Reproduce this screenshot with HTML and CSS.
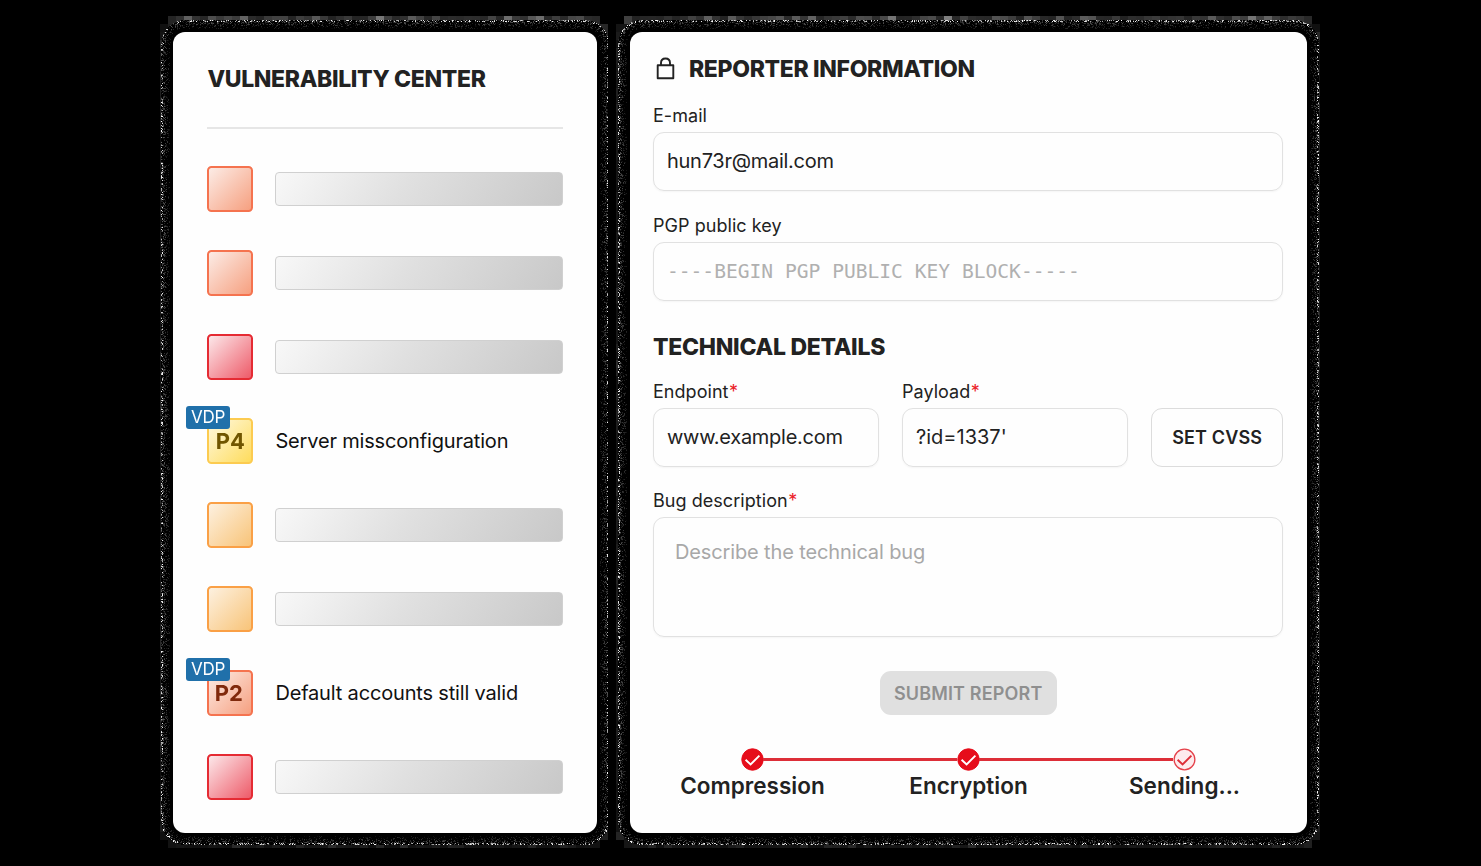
FILE: index.html
```html
<!DOCTYPE html>
<html lang="en">
<head>
<meta charset="utf-8">
<title>Vulnerability Center</title>
<link rel="stylesheet" href="styles.css">
</head>
<body>
<canvas class="grain" width="1481" height="866"></canvas>
<main class="board">
  <section class="card center">
    <h2 class="title">VULNERABILITY CENTER</h2>
    <ul class="list">
      <li class="row"><span class="level orange"></span><span class="bar"></span></li>
      <li class="row"><span class="level orange"></span><span class="bar"></span></li>
      <li class="row"><span class="level red"></span><span class="bar"></span></li>
      <li class="row"><span class="level yellow">P4<span class="tag">VDP</span></span><span class="name">Server missconfiguration</span></li>
      <li class="row"><span class="level amber"></span><span class="bar"></span></li>
      <li class="row"><span class="level amber"></span><span class="bar"></span></li>
      <li class="row"><span class="level orange p2">P2<span class="tag">VDP</span></span><span class="name">Default accounts still valid</span></li>
      <li class="row"><span class="level red"></span><span class="bar"></span></li>
    </ul>
  </section>

  <section class="card report">
    <h2 class="title reporter">
      <svg class="lock" viewBox="0 0 20 24" fill="none" stroke="#222" stroke-width="1.9" stroke-linejoin="round"><path d="M1.7 8.3H17.3V21.3H1.7Z"/><path d="M5 8.3V6.1C5 3.3 6.9 1.5 9.5 1.5S14 3.3 14 6.1V8.3"/></svg>
      <span>REPORTER INFORMATION</span>
    </h2>
    <div class="label">E-mail</div>
    <div class="input">hun73r@mail.com</div>
    <div class="label second">PGP public key</div>
    <div class="input mono">----BEGIN PGP PUBLIC KEY BLOCK-----</div>
    <h2 class="title technical">TECHNICAL DETAILS</h2>
    <div class="fields">
      <div><div class="label">Endpoint<i>*</i></div><div class="input">www.example.com</div></div>
      <div><div class="label">Payload<i>*</i></div><div class="input payload">?id=1337'</div></div>
      <div class="cvss">SET CVSS</div>
    </div>
    <div class="label third">Bug description<i>*</i></div>
    <div class="input area">Describe the technical bug</div>
    <div class="submit">SUBMIT REPORT</div>
    <div class="steps">
      <div class="step done"><svg class="dot" viewBox="0 0 24 24"><circle cx="12" cy="12" r="11.2"/><path d="M4.8 12.2L10 17.2L19.2 8"/></svg><span>Compression</span></div>
      <div class="step done"><svg class="dot" viewBox="0 0 24 24"><circle cx="12" cy="12" r="11.2"/><path d="M4.8 12.2L10 17.2L19.2 8"/></svg><span>Encryption</span></div>
      <div class="step busy"><svg class="dot" viewBox="0 0 24 24"><circle cx="12" cy="12" r="10.8"/><path d="M4.8 12.2L10 17.2L19.2 8"/></svg><span>Sending...</span></div>
    </div>
  </section>
</main>
<script src="grain.js"></script>
</body>
</html>
```
FILE: styles.css
```css
* { box-sizing: border-box; }
body {
  margin: 0;
  width: 1481px;
  height: 866px;
  overflow: hidden;
  background: #000;
  color: #222;
  font-family: Inter, "Liberation Sans", sans-serif;
}
.grain { position: absolute; inset: 0; }
.board {
  position: relative;
  display: flex;
  gap: 33px;
  padding: 32px 174px 33px 173.4px;
}
.card { height: 801px; background: #fefefe; border-radius: 12px; }
.center { width: 423.6px; padding: 0 34.2px 0 34px; }
.report { width: 677px; padding: 0 23.6px 0 23px; }
.title {
  margin: 0;
  font-size: 23px;
  line-height: 30px;
  font-weight: 800;
  letter-spacing: -.34px;
  white-space: nowrap;
}
.center .title { height: 97px; padding-top: 32px; border-bottom: 2px solid #e6e6e6; }
.list { margin: 0; padding: 18.4px 0 0; list-style: none; }
.row { display: flex; align-items: center; gap: 22px; height: 83.9px; }
.level {
  position: relative;
  width: 46px;
  height: 46px;
  flex: none;
  border: 2px solid;
  border-radius: 4.5px;
  font-size: 22px;
  line-height: 43px;
  font-weight: 700;
  text-align: center;
}
.orange { border-color: #f5734f; background: linear-gradient(135deg, #fcece6, #f6a080); }
.red { border-color: #e52b33; background: linear-gradient(135deg, #fce8ea, #ee5b69); }
.yellow { border-color: #fccb50; background: linear-gradient(135deg, #fff9e2, #fedc5c); color: #705500; }
.amber { border-color: #faa046; background: linear-gradient(135deg, #fdf1e0, #f8c479); }
.p2 { color: #80290c; padding-right: 3px; }
.tag {
  position: absolute;
  left: -23px;
  top: -14px;
  width: 43.5px;
  height: 23px;
  border-radius: 3px;
  background: #2070aa;
  color: #fff;
  font-size: 17px;
  line-height: 23px;
  font-weight: 400;
  letter-spacing: -.2px;
}
.bar {
  flex: 1;
  height: 34px;
  border: 1.5px solid #d0d0d0;
  border-radius: 4px;
  background: linear-gradient(125deg, #f8f8f8, #e0e0e0 45%, #c8c8c8);
}
.name { padding-top: .5px; font-size: 20px; line-height: 26px; letter-spacing: -.17px; color: #111; white-space: nowrap; }
.reporter { display: flex; align-items: center; gap: 13px; height: 72px; padding: 1px 0 0 3px; }
.lock { width: 20px; height: 24px; }
.label {
  height: 22px;
  margin-bottom: 6px;
  padding-top: .5px;
  font-size: 18px;
  line-height: 22px;
  letter-spacing: .05px;
  white-space: nowrap;
}
.label i { margin-left: .5px; color: #eb2027; font-style: normal; }
.second { margin-top: 23px; }
.third { margin-top: 22px; }
.input {
  height: 59px;
  padding: 0 13px;
  border: 1.5px solid #e1e1e1;
  border-radius: 11px;
  box-shadow: 0 1px 2px rgba(0, 0, 0, .04);
  font-size: 20px;
  line-height: 57px;
  letter-spacing: -.27px;
  white-space: nowrap;
}
.payload { letter-spacing: 0; }
.mono { color: #b0b0b0; font-family: "DejaVu Sans Mono", monospace; font-size: 19.6px; letter-spacing: 0; }
.technical { margin: 31px 0 18px; letter-spacing: -.28px; }
.fields { display: grid; grid-template-columns: 226px 226px 1fr; gap: 23px; align-items: end; }
.cvss {
  height: 59px;
  border: 1.5px solid #dcdcdc;
  border-radius: 11px;
  font-size: 18px;
  line-height: 58px;
  font-weight: 600;
  letter-spacing: .15px;
  text-align: center;
}
.area { height: 120px; padding: 5px 21px; color: #a8a8a8; line-height: 58px; letter-spacing: -.13px; }
.submit {
  width: 177px;
  height: 44px;
  margin: 34px auto 33px;
  border-radius: 11px;
  background: #e0e0e0;
  color: #8f8f8f;
  font-size: 18px;
  line-height: 45px;
  font-weight: 600;
  letter-spacing: .15px;
  text-align: center;
}
.steps { display: grid; grid-template-columns: repeat(3, 216px); margin: 0 -9px 0 -8.5px; }
.step {
  position: relative;
  display: flex;
  flex-direction: column;
  align-items: center;
  font-size: 22.5px;
  line-height: 30px;
  font-weight: 600;
}
.done::after {
  content: "";
  position: absolute;
  left: 119px;
  top: 10px;
  width: 194px;
  height: 3px;
  background: #dd2e38;
}
.dot { width: 23px; height: 23px; fill: #e60d1b; stroke: #fff; stroke-width: 2; }
.dot circle { stroke: #e60d1b; stroke-width: 1; }
.dot path { fill: none; }
.busy .dot { fill: #fdebed; stroke: #dd2e38; }
.busy .dot circle { stroke: #e5414a; stroke-width: 1.4; }
```
FILE: grain.js
```js
// Speckled shadow around both cards, with coarse grey cells at its outer edge.
const ctx = document.querySelector('.grain').getContext('2d');
const W = 1481, H = 866;
const cards = [
  { box: [173.5, 32, 597, 833], from: 160, to: 608 },
  { box: [630, 32, 1307, 833], from: 616, to: 1320 }
];
let seed = 1337;
const rnd = () => (seed = (seed * 16807) % 2147483647) / 2147483647;

function distance(x, y, [l, t, r, b]) {
  const radius = 12;
  const dx = Math.abs(x - (l + r) / 2) - (r - l) / 2 + radius;
  const dy = Math.abs(y - (t + b) / 2) - (b - t) / 2 + radius;
  return Math.hypot(Math.max(dx, 0), Math.max(dy, 0)) - radius;
}

const image = ctx.createImageData(W, H);
function put(x, y, v) {
  const i = (y * W + x) * 4;
  image.data[i] = image.data[i + 1] = image.data[i + 2] = v;
  image.data[i + 3] = 255;
}

for (const { box, from, to } of cards) {
  for (let cy = 16; cy < 848; cy += 8) {
    for (let cx = from; cx < to; cx += 8) {
      let near = 99;
      for (let y = 0; y < 8; y++)
        for (let x = 0; x < 8; x++)
          near = Math.min(near, distance(cx + x + .5, cy + y + .5, box));
      if (near > 11.5) continue;
      const top = cy < 24;
      const shade = top ? 35 + rnd() * rnd() * 95 : 16 + rnd() * rnd() * 30;
      for (let y = cy; y < cy + 8; y++) {
        for (let x = cx; x < cx + 8; x++) {
          const d = distance(x + .5, y + .5, box);
          if (d <= 1) continue;
          if (d > 12) { put(x, y, shade); continue; }
          const p = rnd();
          let v = 0;
          if (d > 10 && p < .22) v = 140 + rnd() * 115;
          else if (d > 3 && p < d * .05) v = rnd() * (10 + d * 8);
          put(x, y, v);
        }
      }
    }
  }
}
ctx.putImageData(image, 0, 0);
```
